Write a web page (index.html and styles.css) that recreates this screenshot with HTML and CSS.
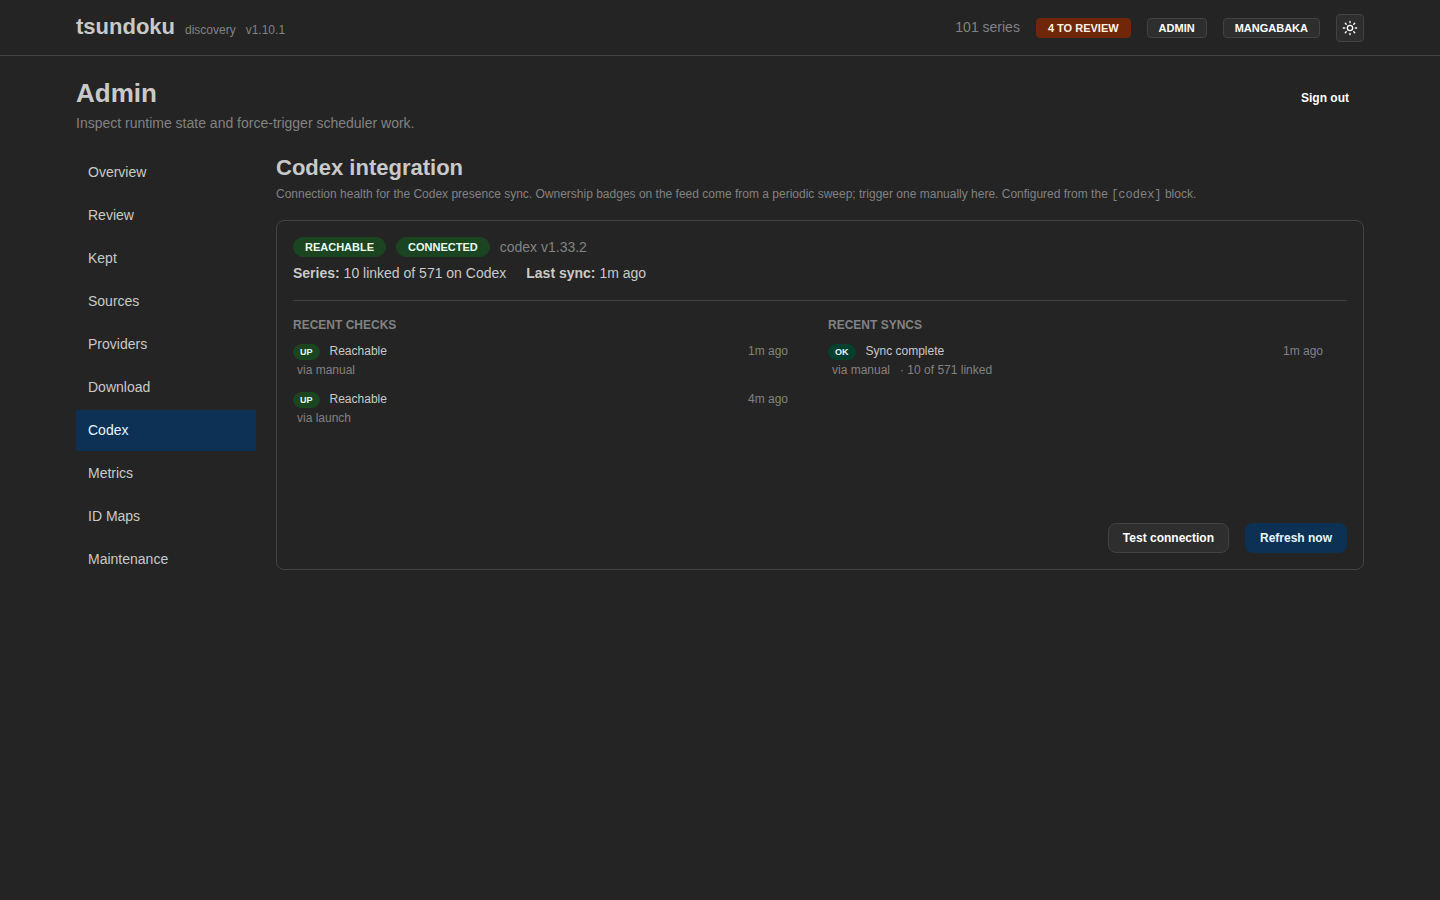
FILE: index.html
```html
<!DOCTYPE html>
<html lang="en">
  <head>
    <meta charset="UTF-8">
    <meta name="viewport" content="width=device-width, initial-scale=1.0">
    <title>tsundoku - Admin</title>
    <link rel="stylesheet" href="styles.css">
  </head>
  <body>
    <header class="topbar">
      <div class="container topbar-inner">
        <div class="brand">
          <a class="brand-name" href="#">tsundoku</a>
          <span class="brand-meta">discovery</span>
          <span class="brand-meta">v1.10.1</span>
        </div>
        <div class="topbar-actions">
          <span class="series-count">101 series</span>
          <a class="badge badge-review" href="#">4 to review</a>
          <a class="badge badge-default" href="#">Admin</a>
          <a class="badge badge-default" href="#">MangaBaka</a>
          <button class="theme-toggle" type="button" aria-label="Toggle color scheme">
            <svg width="16" height="16" viewBox="0 0 24 24" fill="none" stroke="currentColor" stroke-width="2" stroke-linecap="round" stroke-linejoin="round">
              <circle cx="12" cy="12" r="4"/>
              <path d="M12 2v2M12 20v2M4.93 4.93l1.41 1.41M17.66 17.66l1.41 1.41M2 12h2M20 12h2M6.34 17.66l-1.41 1.41M19.07 4.93l-1.41 1.41"/>
            </svg>
          </button>
        </div>
      </div>
    </header>

    <main class="container page">
      <div class="page-head">
        <div>
          <h1>Admin</h1>
          <p class="page-lead">Inspect runtime state and force-trigger scheduler work.</p>
        </div>
        <button class="button button-subtle" type="button">Sign out</button>
      </div>

      <div class="layout">
        <nav class="sidebar">
          <a href="#">Overview</a>
          <a href="#">Review</a>
          <a href="#">Kept</a>
          <a href="#">Sources</a>
          <a href="#">Providers</a>
          <a href="#">Download</a>
          <a class="active" href="#" aria-current="page">Codex</a>
          <a href="#">Metrics</a>
          <a href="#">ID Maps</a>
          <a href="#">Maintenance</a>
        </nav>

        <section class="content">
          <h2>Codex integration</h2>
          <p class="content-lead">Connection health for the Codex presence sync. Ownership badges on the feed come from a periodic sweep; trigger one manually here. Configured from the <code>[codex]</code> block.</p>

          <div class="card">
            <div class="status-row">
              <span class="badge badge-pill badge-green">Reachable</span>
              <span class="badge badge-pill badge-green">Connected</span>
              <span class="version">codex v1.33.2</span>
            </div>
            <div class="stats-row">
              <span><strong>Series:</strong> 10 linked of 571 on Codex</span>
              <span><strong>Last sync:</strong> 1m ago</span>
            </div>

            <hr>

            <div class="history">
              <div class="history-column">
                <h3>Recent checks</h3>
                <ul class="event-list">
                  <li>
                    <div class="event-main">
                      <span class="badge badge-small badge-green">Up</span>
                      <span>Reachable</span>
                      <time class="event-time">1m ago</time>
                    </div>
                    <div class="event-detail"><span>via manual</span></div>
                  </li>
                  <li>
                    <div class="event-main">
                      <span class="badge badge-small badge-green">Up</span>
                      <span>Reachable</span>
                      <time class="event-time">4m ago</time>
                    </div>
                    <div class="event-detail"><span>via launch</span></div>
                  </li>
                </ul>
              </div>
              <div class="history-column">
                <h3>Recent syncs</h3>
                <ul class="event-list">
                  <li>
                    <div class="event-main">
                      <span class="badge badge-small badge-teal">OK</span>
                      <span>Sync complete</span>
                      <time class="event-time">1m ago</time>
                    </div>
                    <div class="event-detail"><span>via manual</span><span>· 10 of 571 linked</span></div>
                  </li>
                </ul>
              </div>
            </div>

            <div class="card-actions">
              <button class="button button-default" type="button">Test connection</button>
              <button class="button button-primary" type="button">Refresh now</button>
            </div>
          </div>
        </section>
      </div>
    </main>
  </body>
</html>
```

FILE: styles.css
```css
* {
  box-sizing: border-box;
}

body {
  margin: 0;
  background-color: #242424;
  color: #c9c9c9;
  font-family: "Liberation Sans", Arial, sans-serif;
  font-size: 14px;
  line-height: 22px;
}

h1,
h2,
h3,
p,
ul {
  margin: 0;
  padding: 0;
}

a {
  color: inherit;
  text-decoration: none;
}

.container {
  max-width: 1320px;
  margin: 0 auto;
  padding: 0 16px;
}

/* Top bar */
.topbar {
  border-bottom: 1px solid #424242;
}

.topbar-inner {
  display: flex;
  align-items: center;
  justify-content: space-between;
  min-height: 55px;
}

.brand {
  display: flex;
  align-items: baseline;
  gap: 10px;
}

.brand,
.series-count {
  padding-bottom: 2px;
}

.brand-name {
  font-size: 22px;
  font-weight: bold;
  line-height: 30px;
}

.brand-meta {
  color: #828282;
  font-size: 12px;
}

.topbar-actions {
  display: flex;
  align-items: center;
  gap: 16px;
}

.series-count,
.version {
  color: #828282;
}

.theme-toggle {
  display: flex;
  align-items: center;
  justify-content: center;
  width: 28px;
  height: 28px;
  padding: 0;
  border: 1px solid #424242;
  border-radius: 4px;
  background-color: #2e2e2e;
  color: #fff;
  cursor: pointer;
}

/* Badges */
.badge {
  display: inline-flex;
  align-items: center;
  height: 20px;
  padding: 0 11px;
  border: 1px solid transparent;
  border-radius: 4px;
  color: #fff;
  font-size: 11px;
  font-weight: bold;
  line-height: 18px;
  text-transform: uppercase;
}

.badge-review {
  border-color: #702608;
  background-color: #702608;
  color: #fff4e6;
}

.badge-default {
  border-color: #424242;
  background-color: #2e2e2e;
}

.badge-pill {
  border-radius: 10px;
}

.badge-small {
  height: 16px;
  padding: 0 6px;
  border-radius: 8px;
  font-size: 9px;
  line-height: 14px;
}

.badge-green {
  border-color: #1a4520;
  background-color: #1a4520;
  color: #ebfbee;
}

.badge-teal {
  border-color: #04402e;
  background-color: #04402e;
  color: #e6fcf5;
}

/* Buttons */
.button {
  height: 30px;
  padding: 0 14px;
  border: 1px solid transparent;
  border-radius: 8px;
  color: #fff;
  font-family: inherit;
  font-size: 12px;
  font-weight: bold;
  cursor: pointer;
}

.button-subtle {
  height: 44px;
  background-color: transparent;
}

.button-default {
  border-color: #424242;
  background-color: #2e2e2e;
}

.button-primary {
  border-color: #0c3155;
  background-color: #0c3155;
  color: #e7f5ff;
}

/* Page */
.page {
  padding-top: 20px;
  padding-bottom: 20px;
}

.page-head {
  display: flex;
  align-items: flex-start;
  justify-content: space-between;
  margin-bottom: 18px;
}

h1 {
  font-size: 26px;
  line-height: 34px;
}

.page-lead {
  margin-top: 2px;
  color: #828282;
}

.layout {
  display: flex;
  align-items: flex-start;
  gap: 20px;
}

.sidebar {
  display: flex;
  flex: 0 0 180px;
  flex-direction: column;
  gap: 2px;
}

.sidebar a {
  padding: 10px 12px;
  line-height: 21px;
}

.sidebar .active {
  background-color: #0c3155;
  color: #e7f5ff;
}

.content {
  flex: 1;
  min-width: 0;
}

h2 {
  font-size: 22px;
  line-height: 32px;
}

.content-lead {
  padding-top: 1px;
  margin-bottom: 15px;
  color: #828282;
  font-size: 12px;
  line-height: 19px;
}

code {
  font-family: "Liberation Mono", monospace;
  font-size: 12px;
}

/* Card */
.card {
  padding: 16px;
  border: 1px solid #424242;
  border-radius: 8px;
}

.status-row {
  display: flex;
  align-items: center;
  gap: 10px;
  line-height: 20px;
}

.stats-row {
  display: flex;
  gap: 20px;
  margin-top: 5px;
}

hr {
  margin: 16px 0;
  border: none;
  border-top: 1px solid #424242;
}

.history {
  display: grid;
  grid-template-columns: 1fr 1fr;
  gap: 16px;
  min-height: 190px;
}

.history-column {
  padding-right: 24px;
}

h3 {
  margin-bottom: 8px;
  color: #828282;
  font-size: 12px;
  line-height: 17px;
  text-transform: uppercase;
}

.event-list {
  display: flex;
  flex-direction: column;
  gap: 10px;
  font-size: 12px;
  line-height: 19px;
  list-style: none;
}

.event-main {
  display: flex;
  align-items: center;
  gap: 10px;
}

.event-time {
  margin-left: auto;
  color: #828282;
}

.event-detail {
  display: flex;
  gap: 10px;
  padding-left: 4px;
  color: #828282;
}

.card-actions {
  display: flex;
  justify-content: flex-end;
  gap: 16px;
  margin-top: 16px;
}
```
